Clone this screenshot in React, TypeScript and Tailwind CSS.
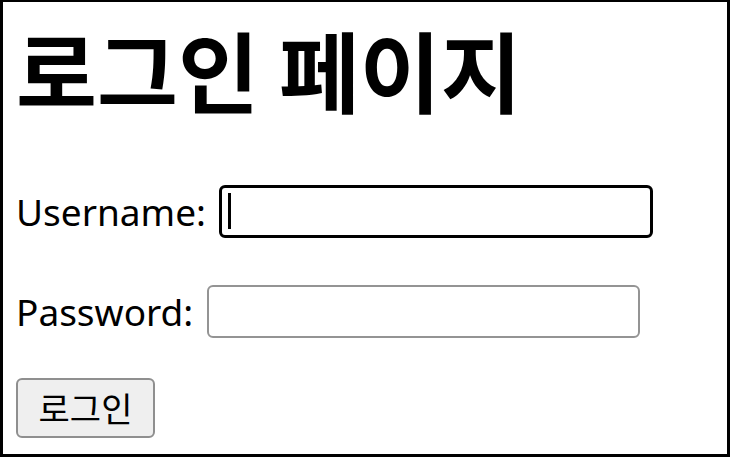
import React from "react";

const font = { fontFamily: '"Noto Sans", "Noto Sans CJK KR", sans-serif' };

export default function App() {
  return (
    <div
      className="w-[730px] h-[457px] bg-white border-[3px] border-t-2 border-black text-black flex flex-col items-start pl-[13px]"
      style={font}
    >
      <h1 className="mt-[11px] text-[88px] font-bold leading-[110px] [font-family:'Noto_Sans_CJK_KR',sans-serif]">
        로그인 페이지
      </h1>

      <div className="mt-[62px] flex items-center gap-[13px]">
        <label htmlFor="username" className="text-[37px] leading-[53px]">
          Username:
        </label>
        <div className="relative">
          <input
            id="username"
            type="text"
            className="block w-[434px] h-[53px] border-[3px] border-black rounded-[6px] bg-white outline-none"
          />
          <span className="absolute left-[9px] top-[8px] w-[3px] h-[36px] bg-black" />
        </div>
      </div>

      <div className="mt-[47px] flex items-center gap-[14px]">
        <label htmlFor="password" className="text-[37px] leading-[53px]">
          Password:
        </label>
        <input
          id="password"
          type="password"
          className="block w-[433px] h-[53px] border-2 border-[#949494] rounded-[6px] bg-white outline-none"
        />
      </div>

      <button
        type="button"
        className="mt-[40px] w-[139px] h-[60px] bg-[#efefef] border-2 border-[#8f8f8f] rounded-[6px] text-[34px] leading-none [font-family:'Noto_Sans_CJK_KR',sans-serif]"
      >
        로그인
      </button>
    </div>
  );
}
